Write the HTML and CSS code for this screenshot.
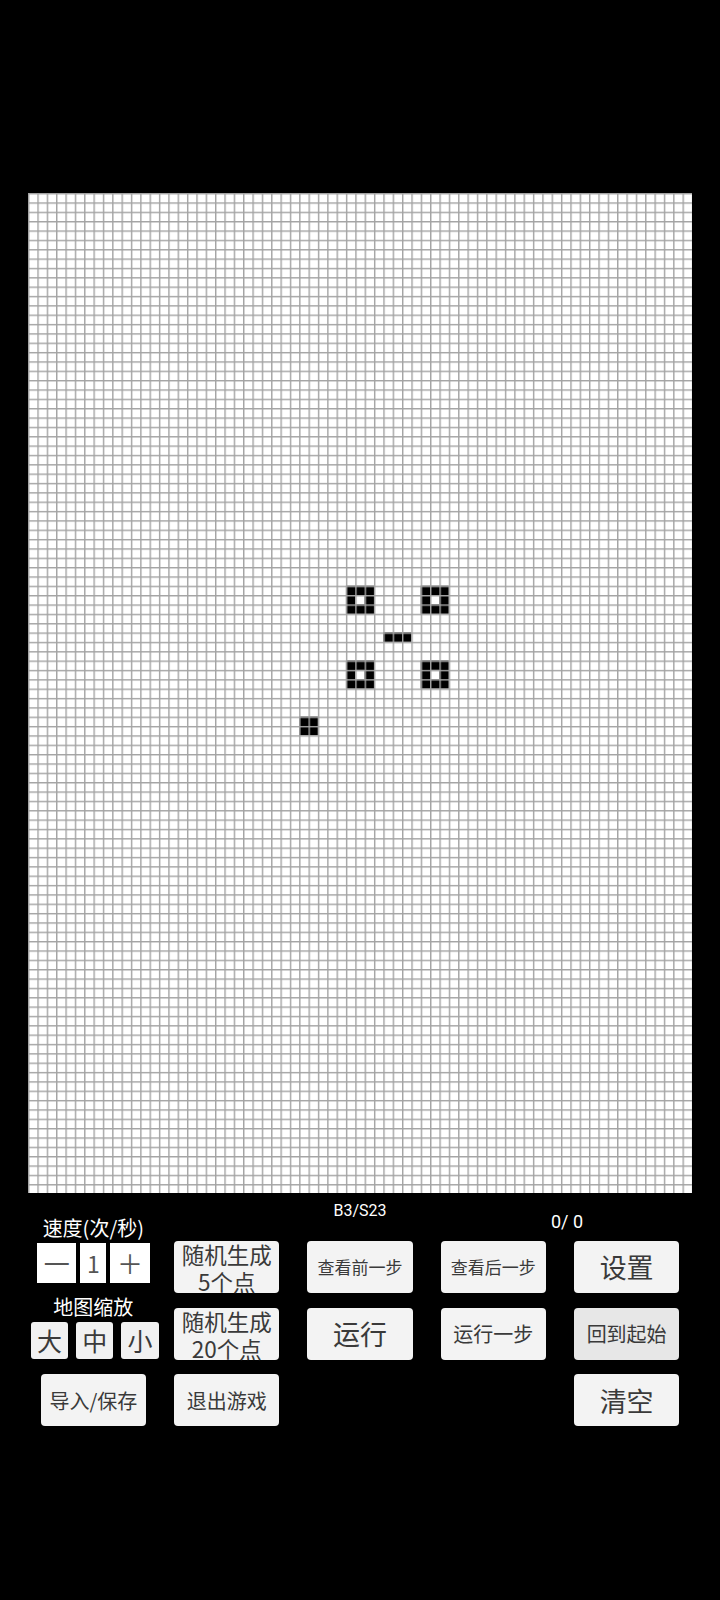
FILE: index.html
```html
<!DOCTYPE html>
<html lang="zh-CN">
<head>
<meta charset="utf-8">
<title>生命游戏</title>
<link rel="stylesheet" href="styles.css">
</head>
<body>
<main class="app">
  <div class="board">
    <svg class="grid" viewBox="0 0 664 1000" width="664" height="1000" xmlns="http://www.w3.org/2000/svg">
      <defs>
        <pattern id="cells" width="9.35" height="9.35" patternUnits="userSpaceOnUse">
          <rect x="0" y="0" width="1.4" height="9.35" fill="#a3a3a3"/>
          <rect x="0" y="0" width="9.35" height="1.4" fill="#a3a3a3"/>
        </pattern>
      </defs>
      <rect width="664" height="1000" fill="#ffffff"/>
      <g fill="#000000">
        <rect x="317.9" y="392.7" width="28.05" height="28.05"/>
        <rect x="392.7" y="392.7" width="28.05" height="28.05"/>
        <rect x="317.9" y="467.5" width="28.05" height="28.05"/>
        <rect x="392.7" y="467.5" width="28.05" height="28.05"/>
        <rect x="355.3" y="439.45" width="28.05" height="9.35"/>
        <rect x="271.15" y="523.6" width="18.7" height="18.7"/>
      </g>
      <g fill="#ffffff">
        <rect x="327.25" y="402.05" width="9.35" height="9.35"/>
        <rect x="402.05" y="402.05" width="9.35" height="9.35"/>
        <rect x="327.25" y="476.85" width="9.35" height="9.35"/>
        <rect x="402.05" y="476.85" width="9.35" height="9.35"/>
      </g>
      <rect width="664" height="1000" fill="url(#cells)"/>
    </svg>
  </div>

  <section class="panel">
    <div class="side">
      <div class="label">速度(次/秒)</div>
      <div class="speed">
        <span class="sbox">一</span>
        <span class="sbox num">1</span>
        <span class="sbox">＋</span>
      </div>
      <div class="label label-zoom">地图缩放</div>
      <div class="zoomrow">
        <button class="zbtn">大</button>
        <button class="zbtn">中</button>
        <button class="zbtn">小</button>
      </div>
    </div>

    <div class="rule">B3/S23</div>
    <div class="count">0/ 0</div>

    <button class="btn two c2 r2"><span class="ln">随机生成</span><span class="ln">5个点</span></button>
    <button class="btn small c3 r2">查看前一步</button>
    <button class="btn small c4 r2">查看后一步</button>
    <button class="btn big c5 r2">设置</button>

    <button class="btn two c2 r3"><span class="ln">随机生成</span><span class="ln">20个点</span></button>
    <button class="btn big c3 r3">运行</button>
    <button class="btn mid c4 r3">运行一步</button>
    <button class="btn mid c5 r3 pressed">回到起始</button>

    <button class="btn mid c1 r4">导入/保存</button>
    <button class="btn mid c2 r4">退出游戏</button>
    <button class="btn big c5 r4">清空</button>
  </section>
</main>
</body>
</html>
```

FILE: styles.css
```css
html, body {
  margin: 0;
  padding: 0;
  background: #000;
}

body {
  width: 720px;
  min-height: 1600px;
  font-family: "Noto Sans CJK SC", "Noto Sans", sans-serif;
  overflow: hidden;
}

.app {
  padding-top: 193px;
}

.board {
  margin-left: 28px;
  width: 664px;
  height: 1000px;
  background: #fff;
}

.grid {
  display: block;
}

.panel {
  display: grid;
  grid-template-columns: repeat(5, 133.333px);
  grid-template-rows: 33.333px 52px 52px 52px;
  row-gap: 14.667px;
  margin-left: 26.667px;
}

.side {
  grid-column: 1;
  grid-row: 1 / 4;
  display: flex;
  flex-direction: column;
  align-items: center;
  padding-top: 23px;
}

.label {
  color: #fff;
  font-size: 20px;
  line-height: 24px;
  height: 24px;
  white-space: nowrap;
}

.label-zoom {
  margin-top: 12.5px;
}

.speed {
  display: flex;
  gap: 4px;
  margin-top: 3px;
  height: 39.5px;
}

.sbox {
  width: 39.3px;
  background: #fff;
  color: #555;
  font-size: 26px;
  display: flex;
  align-items: center;
  justify-content: center;
}

.sbox.num {
  width: 26px;
  font-size: 23px;
}

.zoomrow {
  display: flex;
  gap: 8px;
  margin-top: 2.7px;
  height: 37.6px;
  padding-left: 3px;
}

.zbtn {
  width: 37.3px;
  height: 100%;
  padding: 0;
  border: none;
  border-radius: 3px;
  background: #f1f1f1;
  color: #3a3a3a;
  font-family: inherit;
  font-size: 25px;
  display: flex;
  align-items: center;
  justify-content: center;
}

.rule {
  grid-column: 3;
  grid-row: 1;
  align-self: start;
  margin-top: 10px;
  color: #fff;
  font-family: Roboto, "Liberation Sans", sans-serif;
  font-size: 16px;
  line-height: 16px;
  text-align: center;
}

.count {
  grid-column: 4 / 6;
  grid-row: 1;
  align-self: start;
  margin-top: 19.7px;
  padding-left: 14px;
  color: #fff;
  font-family: Roboto, "Liberation Sans", sans-serif;
  font-size: 18px;
  line-height: 18px;
  text-align: center;
  white-space: pre;
}

.btn {
  justify-self: center;
  width: 105.333px;
  height: 100%;
  padding: 0;
  border: none;
  border-radius: 4px;
  background: #f3f3f3;
  color: #3a3a3a;
  font-family: inherit;
  display: flex;
  align-items: center;
  justify-content: center;
  white-space: nowrap;
}

.btn.pressed {
  background: #e7e7e7;
}

.btn.small { font-size: 17px; }
.btn.mid { font-size: 20px; }
.btn.big { font-size: 27px; }

.btn.two {
  flex-direction: column;
  font-size: 22.5px;
  padding-top: 2px;
}

.btn.two .ln {
  display: block;
  line-height: 26.5px;
}

.c1 { grid-column: 1; }
.c2 { grid-column: 2; }
.c3 { grid-column: 3; }
.c4 { grid-column: 4; }
.c5 { grid-column: 5; }
.r2 { grid-row: 2; }
.r3 { grid-row: 3; }
.r4 { grid-row: 4; }
```
